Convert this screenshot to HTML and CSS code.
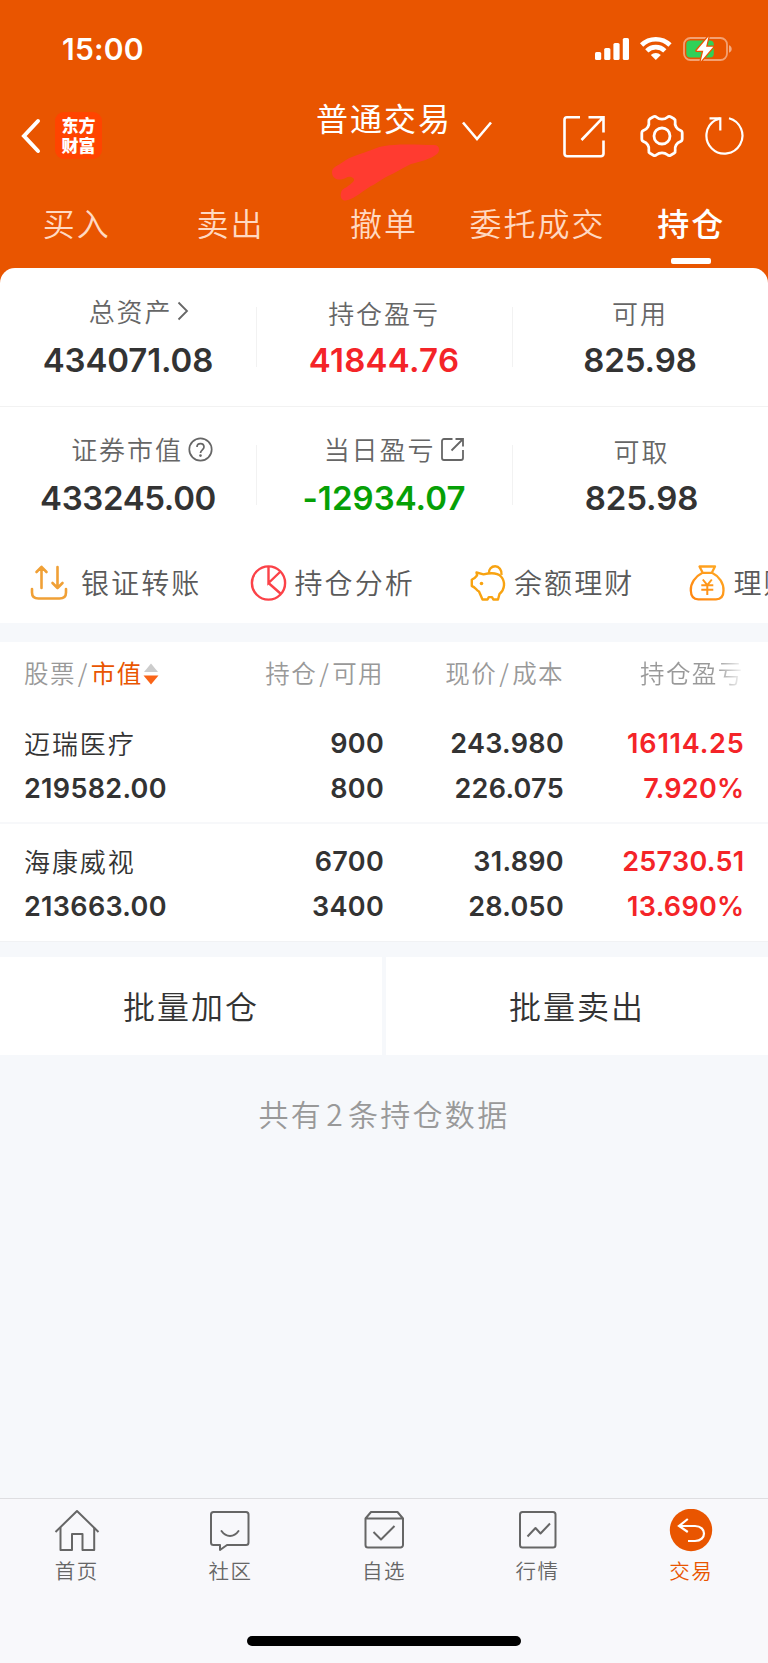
FILE: index.html
```html
<!DOCTYPE html>
<html lang="zh-CN">
<head>
<meta charset="utf-8">
<title>持仓</title>
<link rel="stylesheet" href="styles.css">
</head>
<body>
<div class="screen">
  <header class="header">
    <div class="status">
      <span class="time">15:00</span>
      <svg class="status-icons" width="138" height="28" viewBox="0 0 138 28">
        <g fill="#fff">
          <rect x="0" y="17" width="6.2" height="8" rx="1.6"/>
          <rect x="9.2" y="13" width="6.2" height="12" rx="1.6"/>
          <rect x="18.4" y="8" width="6.2" height="17" rx="1.6"/>
          <rect x="27.8" y="3" width="6.2" height="22" rx="1.6"/>
        </g>
        <g fill="none" stroke="#fff" stroke-width="4.6">
          <path d="M46.6 10a20.300 20.300 0 0 1 28.400 0"/>
          <path d="M51.800 15.800a12.800 12.800 0 0 1 18 0"/>
        </g>
        <path d="M60.800 25l-5-5a7.300 7.300 0 0 1 10 0z" fill="#fff"/>
        <rect x="89" y="3" width="43" height="22" rx="6.5" fill="none" stroke="#fff" stroke-opacity=".45" stroke-width="1.8"/>
        <path d="M134 10.300c3.600 1 3.600 6.400 0 7.400z" fill="#fff" fill-opacity=".5"/>
        <rect x="91.300" y="5.600" width="27.500" height="16.800" rx="4" fill="#30d158"/>
        <path d="M113.500 1.500l-12 14.200h6.800l-2.600 10.800 12.600-14.800h-7.200z" fill="#fff" stroke="#e95500" stroke-width="2.600" paint-order="stroke" stroke-linejoin="round"/>
      </svg>
    </div>
    <div class="nav">
      <svg class="back" width="22" height="38" viewBox="0 0 22 38"><path d="M18 4L4 19l14 15" fill="none" stroke="#fff" stroke-width="4" stroke-linecap="round" stroke-linejoin="miter"/></svg>
      <div class="logo"><span>东方</span><span>财富</span></div>
      <div class="title">普通交易</div>
      <svg class="caret" width="32" height="22" viewBox="0 0 32 22"><path d="M2 2.500l14 16.500L30 2.500" fill="none" stroke="#fff" stroke-width="2.600"/></svg>
      <svg class="share" width="44" height="44" viewBox="0 0 44 44"><g fill="none" stroke="#fff" stroke-width="2.600"><path d="M18 2.200H5a2.500 2.500 0 0 0-2.500 2.500v34a2.500 2.500 0 0 0 2.500 2.500h34a2.500 2.500 0 0 0 2.500-2.500V25.500"/><path d="M26.500 2.200h15v15.300M41 2.700L19.500 25"/></g></svg>
      <svg class="gear" width="46" height="46" viewBox="-23 -23 46 46"><g fill="none" stroke="#fff" stroke-width="2.800" stroke-linejoin="round"><circle r="8"/><path d="M-8.600-19.200Q-7-20.200-5.400-18.800C-2.500-16.300 2.500-16.300 5.400-18.800Q7-20.200 8.600-19.200L12-17.300Q13.600-16.300 13.200-14.300C12.400-10.500 14.800-6.700 18.300-5.700Q20.200-5 20.200-3V3Q20.200 5 18.300 5.700C14.800 6.700 12.400 10.500 13.200 14.300Q13.600 16.300 12 17.300L8.600 19.200Q7 20.200 5.400 18.800C2.500 16.300-2.500 16.300-5.400 18.800Q-7 20.200-8.600 19.200L-12 17.300Q-13.600 16.300-13.200 14.300C-12.400 10.500-14.800 6.700-18.300 5.700Q-20.200 5-20.200 3V-3Q-20.200-5-18.300-5.700C-14.800-6.700-12.400-10.500-13.200-14.300Q-13.600-16.300-12-17.300Z"/></g></svg>
      <svg class="refresh" width="40" height="42" viewBox="0 0 40 42"><g fill="none" stroke="#fff" stroke-width="2.200"><path d="M24 3.200A18 18 0 1 1 10.300 5.100L15.300 3.400"/><path d="M4.500 3.400h10.800v12.200"/></g></svg>
      <svg class="scribble" width="112" height="60" viewBox="0 0 112 60"><path d="M1 28C1 23 8 21 12 18C18 13 30 10 43 5C50 2 57 1 63 1C75 0 92 1 103 1C108 1 110 6 106 10C100 15 88 18 80 20C71 24 64 29 57 32C49 36 45 40 40 42C32 47 24 54 17 56C10 58 9 52 10 49C10 45 15 44 17 42C21 39 25 36 22 34C18 31 15 34 12 35C6 37 1 34 1 28Z" fill="#ff3b30"/></svg>
    </div>
    <nav class="tabs">
      <span class="tab">买入</span><span class="tab">卖出</span><span class="tab">撤单</span><span class="tab">委托成交</span><span class="tab active">持仓</span>
    </nav>
  </header>

  <section class="summary">
    <div class="sum-row">
      <div class="cell"><div class="label up lead">总资产<svg class="chev" width="12" height="20" viewBox="0 0 12 20"><path d="M1.500 1.500l8.500 8.500-8.500 8.500" fill="none" stroke="#666" stroke-width="1.800"/></svg></div><div class="num tight">434071.08</div></div>
      <div class="cell"><div class="label">持仓盈亏</div><div class="num red">41844.76</div></div>
      <div class="cell"><div class="label">可用</div><div class="num tight">825.98</div></div>
    </div>
    <div class="sum-row">
      <div class="cell"><div class="label up lead2">证券市值<svg class="help" width="25" height="25" viewBox="0 0 25 25"><g fill="none" stroke="#666" stroke-width="1.700"><circle cx="12.500" cy="12.500" r="11.200"/><path d="M9 10c0-4.600 7-4.600 7 0 0 2.700-3.500 2.900-3.500 6"/></g><circle cx="12.500" cy="18.600" r="1.300" fill="#666"/></svg></div><div class="num tighter">433245.00</div></div>
      <div class="cell"><div class="label up lead3">当日盈亏<svg class="ext" width="24" height="24" viewBox="0 0 24 24"><g fill="none" stroke="#666" stroke-width="1.800"><path d="M12.500 2H4a2 2 0 0 0-2 2v17a2 2 0 0 0 2 2h17a2 2 0 0 0 2-2v-8"/><path d="M15.500 2H23v7.500M22.500 2.500L11.500 13.500"/></g></svg></div><div class="num green">-12934.07</div></div>
      <div class="cell nudge"><div class="label">可取</div><div class="num tight">825.98</div></div>
    </div>
    <div class="actions">
      <div class="action"><svg width="38" height="38" viewBox="0 0 38 38"><g fill="none" stroke="#f0a036" stroke-width="2.600" stroke-linecap="round" stroke-linejoin="round"><path d="M2 25v3.500c0 4 2.500 6 6.500 6h21c4 0 6.500-2 6.500-6V25"/><path d="M11.500 24V3M6.500 8l5-5.200 5 5.200M27.500 3v21M22.500 19l5 5 5-5"/></g></svg><span class="gap-wide">银证转账</span></div>
      <div class="action"><svg width="38" height="38" viewBox="0 0 38 38"><g fill="none" stroke="#fb4248" stroke-width="2.400"><circle cx="18.500" cy="19" r="16.600"/><path d="M18.500 2.400V19l11.500-11M18.500 19l12.500 11"/></g></svg><span>持仓分析</span></div>
      <div class="action"><svg width="38" height="38" viewBox="0 0 38 38"><g fill="none" stroke="#f8a311" stroke-width="2.400" stroke-linejoin="round"><path d="M7.500 8.500l7 1.800c9-2 14-1.600 17.500 2.200 4.500 5 4 13-1.500 17.500l-1.500 5.500h-4.700l-1.300-2.400h-3.200l-1.300 2.400H13.500L10 27.500C7 26 6.500 23 2.800 22V15.600c3-.6 4-2.600 5.300-4.300z"/><path d="M20 9.300c-.5-4 2.500-7 6.200-7s6.800 3.500 6.300 8.500"/></g><circle cx="12.500" cy="19.500" r="1.800" fill="#f8a311"/></svg><span>余额理财</span></div>
      <div class="action"><svg width="38" height="38" viewBox="0 0 38 38"><defs><linearGradient id="bag" gradientUnits="userSpaceOnUse" x1="34" y1="2" x2="4" y2="36"><stop offset="0" stop-color="#ffab24"/><stop offset="1" stop-color="#ff8511"/></linearGradient></defs><g fill="none" stroke="url(#bag)" stroke-width="2.300" stroke-linejoin="round"><path d="M10.500 2.500h15.500l-3.200 6.300h-9.100zM13.500 8.800h9.500C30.500 12.500 34.800 19.500 34.500 26.500c0 6-2.500 8.800-7.500 8.800H9.300c-5 0-7.300-2.800-7.500-8.800C1.500 19.500 6 12.500 13.500 8.800z"/><path d="M13.800 15.500l4.500 5.700 4.500-5.700M18.300 21v10M12.300 21.300h12M12.300 25.800h12" stroke-width="2"/></g></svg><span>理财</span></div>
    </div>
  </section>

  <section class="table">
    <div class="thead">
      <div class="c1">股票<i class="sl">/</i><b>市值</b><svg class="sort" width="16" height="22" viewBox="0 0 16 22"><path d="M8 .5L15 9H1z" fill="#ccc"/><path d="M8 21.500L.5 12.500h15z" fill="#fa6417"/></svg></div>
      <div class="cr">持仓<i class="sl">/</i>可用</div>
      <div class="cr">现价<i class="sl">/</i>成本</div>
      <div class="fade">持仓盈亏</div>
    </div>
    <div class="trow">
      <div class="c1"><p class="name">迈瑞医疗</p><p>219582.00</p></div>
      <div class="cr"><p>900</p><p>800</p></div>
      <div class="cr"><p>243.980</p><p>226.075</p></div>
      <div class="cr red"><p class="wide">16114.25</p><p>7.920%</p></div>
    </div>
    <div class="trow">
      <div class="c1"><p class="name">海康威视</p><p>213663.00</p></div>
      <div class="cr"><p>6700</p><p>3400</p></div>
      <div class="cr"><p>31.890</p><p>28.050</p></div>
      <div class="cr red"><p>25730.51</p><p>13.690%</p></div>
    </div>
  </section>

  <div class="batch"><div class="btn">批量加仓</div><div class="btn">批量卖出</div></div>
  <p class="count">共有<span>2</span>条持仓数据</p>

  <footer class="tabbar">
    <div class="items">
      <div class="item"><svg width="46" height="44" viewBox="0 0 46 44"><g fill="none" stroke="#666" stroke-width="2" stroke-linejoin="round"><path d="M1.500 23L23 2l21.500 21"/><path d="M6.500 18.500V41H18V25h10.500v16h11.700V18.500"/></g></svg>首页</div>
      <div class="item"><svg width="46" height="44" viewBox="0 0 46 44"><g fill="none" stroke="#666" stroke-width="2" stroke-linejoin="round" stroke-linecap="round"><path d="M6.500 3h32.500a2.500 2.500 0 0 1 2.500 2.500v28a2.500 2.500 0 0 1-2.500 2.500H20l-7 5v-5H6.500A2.500 2.500 0 0 1 4 33.500v-28A2.500 2.500 0 0 1 6.500 3z"/><path d="M14.500 22c4.500 6.500 12.500 6.500 17 0"/></g></svg>社区</div>
      <div class="item"><svg width="46" height="44" viewBox="0 0 46 44"><g fill="none" stroke="#666" stroke-width="2" stroke-linejoin="round"><path d="M4.500 9.500L10 3h26.500L42 9.500V36a2.500 2.500 0 0 1-2.500 2.500H7A2.500 2.500 0 0 1 4.500 36zM4.500 9.500H42"/><path d="M12.500 23l7.500 7.500L33.500 17"/></g></svg>自选</div>
      <div class="item"><svg width="46" height="44" viewBox="0 0 46 44"><g fill="none" stroke="#666" stroke-width="2" stroke-linejoin="round"><rect x="5" y="3" width="35.500" height="35.500" rx="2.500"/><path d="M12.500 27.500l8-8.500 5 5.500L35 14.500"/></g></svg>行情</div>
      <div class="item on"><svg width="46" height="44" viewBox="0 0 46 44"><circle cx="23" cy="21" r="21.200" fill="#e95500"/><path d="M19.800 10L11 17l8.800 6M11.500 17H27c12 0 12 15 0 15h-7" fill="none" stroke="#fff" stroke-width="2.200"/></svg>交易</div>
    </div>
    <div class="home"></div>
  </footer>
</div>
</body>
</html>
```
FILE: styles.css
```css
* { box-sizing: border-box; }
body, p { margin: 0; }
body { background: #f6f8fb; font-family: "Noto Sans CJK SC", sans-serif; font-weight: 350; }
.screen { width: 768px; height: 1663px; display: flex; flex-direction: column; overflow: hidden; }

.header { height: 290px; flex: none; background: #e95500; color: #fff; margin-bottom: -22px; }
.status { height: 98px; padding: 35px 35px 0 62px; display: flex; justify-content: space-between; }
.time { font: 600 30px/28px Inter, sans-serif; letter-spacing: .2px; }
.nav { height: 90px; display: flex; position: relative; }
.nav > * { flex: none; }
.back { margin: 19px 0 0 20px; }
.logo { width: 47px; height: 47px; margin: 14px 0 0 13px; border-radius: 9px; background: #ff4400; display: grid; grid-template-rows: 20px 20px; justify-content: center; font-size: 17px; font-weight: 900; line-height: 20px; padding-top: 3px; }
.title { margin: -2px 0 0 214px; width: 140px; font-size: 32px; line-height: 42px; letter-spacing: 2px; height: 42px; font-weight: 400; }
.caret { margin: 22px 0 0 5px; }
.share { margin: 17px 0 0 69px; }
.gear { margin: 15px 0 0 33px; }
.refresh { margin: 17px 0 0 20px; }
.scribble { position: absolute; left: 331px; top: 46px; filter: blur(.6px); }
.tabs { height: 80px; display: grid; grid-template-columns: repeat(5, 1fr); text-align: center; font-size: 32px; line-height: 68px; letter-spacing: 2px; }
.tab { color: #ffd9c2; }
.tab.active { color: #fff; font-weight: 500; display: flex; flex-direction: column; align-items: center; }
.tab.active::after { content: ""; width: 40px; height: 6px; margin-top: 2px; border-radius: 2px; background: #fff; }

.summary { height: 355px; flex: none; background: #fff; border-radius: 15px 15px 0 0; }
.sum-row { height: 138px; display: grid; grid-template-columns: repeat(3, 256px); }
.sum-row:first-child { border-bottom: 1px solid #f2f2f2; height: 139px; }
.cell { text-align: center; padding-top: 26px; }
.cell + .cell { background: linear-gradient(#f2f2f2, #f2f2f2) 0 39px / 1px 60px no-repeat; }
.sum-row + .sum-row .cell { padding-top: 25px; background-position-y: 38px; }
.label { height: 38px; font-size: 26px; line-height: 38px; letter-spacing: 1.900px; color: #666; display: flex; justify-content: center; align-items: center; }
.label.up { transform: translateY(-2px); }
.lead { padding-left: 22px; }
.lead2 { padding-left: 28px; }
.lead3 { padding-left: 20px; }
.chev { margin-left: 5px; }
.help { margin-left: 5px; }
.ext { margin-left: 5px; }
.sum-row + .sum-row .nudge { padding-left: 3px; }
.num { font: 600 33px/56px Inter, sans-serif; color: #333; letter-spacing: .3px; }
.num.tight { letter-spacing: -.1px; }
.num.tighter { letter-spacing: -.35px; }
.red, .num.red { color: #f42428; }
.num.green { color: #06a006; letter-spacing: .05px; }
.actions { display: flex; height: 78px; padding-left: 30px; overflow: hidden; }
.action { width: 219.500px; flex: none; display: flex; padding-top: 19px; font-size: 28px; line-height: 37px; letter-spacing: 2.100px; color: #5a5a5a; }
.action span { margin-left: 7px; white-space: nowrap; }
.action .gap-wide { margin-left: 13px; }

.table { margin-top: 19px; height: 300px; flex: none; background: #fff; border-bottom: 1px solid #f1f2f4; }
.thead, .trow { display: grid; grid-template-columns: 204px 180px 180px 180.500px; }
.thead { height: 64px; line-height: 62px; font-size: 24.500px; letter-spacing: 1.400px; color: #999; }
.c1 { padding-left: 24px; white-space: nowrap; }
.cr { text-align: right; }
.sl { font-style: normal; margin: 0 2px; }
.thead b { color: #e95500; font-weight: 400; }
.sort { margin-left: 0; vertical-align: -2px; }
.fade { padding-left: 76px; white-space: nowrap; background: linear-gradient(90deg, #999 152px, #fff 181px); -webkit-background-clip: text; background-clip: text; color: transparent; }
.trow { height: 116px; padding-top: 15px; font: 600 27px/45px Inter, sans-serif; letter-spacing: .3px; color: #333; }
.trow + .trow { border-top: 2px solid #f7f8fa; height: 118px; padding-top: 15px; }
.wide { letter-spacing: .8px; }
.name { font: 350 26px/43px "Noto Sans CJK SC", sans-serif; letter-spacing: 1.900px; height: 45px; }

.batch { margin-top: 15px; height: 98px; flex: none; display: flex; gap: 4px; }
.btn { flex: 1; background: #fff; text-align: center; font-size: 32px; line-height: 97px; letter-spacing: 2px; color: #333; }
.count { text-align: center; font-size: 30px; line-height: 44px; letter-spacing: 2.300px; color: #999; margin-top: 36px; }
.count span { margin: 0 3px; }

.tabbar { margin-top: auto; height: 165px; background: #f8f8fb; border-top: 1px solid #dedee1; }
.items { display: grid; grid-template-columns: repeat(5, 1fr); height: 137px; padding-top: 10px; }
.item { display: flex; flex-direction: column; align-items: center; font-size: 20.500px; line-height: 35px; letter-spacing: 1.500px; color: #666; }
.item.on { color: #e95500; }
.home { width: 274px; height: 10px; border-radius: 5px; background: #000; margin: 0 auto; }
```
